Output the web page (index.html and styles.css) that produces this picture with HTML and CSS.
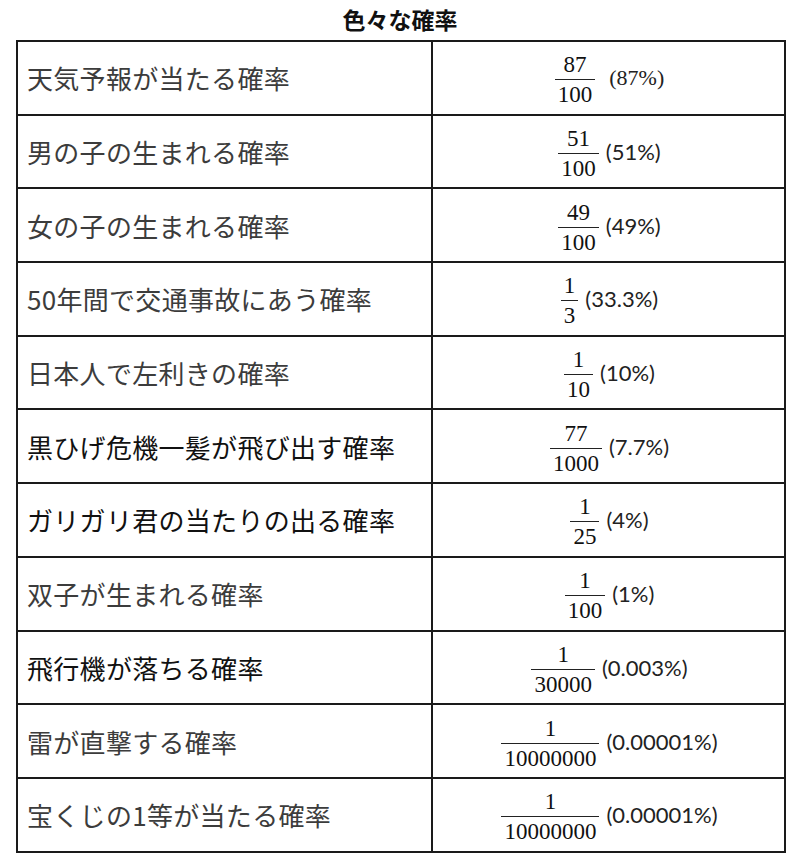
FILE: index.html
```html
<!DOCTYPE html>
<html lang="ja">
<head>
<meta charset="utf-8">
<title>色々な確率</title>
<link rel="stylesheet" href="styles.css">
</head>
<body>
<div class="page">
  <h1 class="title">色々な確率</h1>
  <table class="prob">
    <colgroup><col class="c-label"><col class="c-value"></colgroup>
    <tbody>
      <tr><td class="label">天気予報が当たる確率</td><td class="value"><div class="val wide"><span class="frac"><span class="num">87</span><span class="den">100</span></span><span class="pct serif">(87%)</span></div></td></tr>
      <tr><td class="label">男の子の生まれる確率</td><td class="value"><div class="val"><span class="frac"><span class="num">51</span><span class="den">100</span></span><span class="pct">(51%)</span></div></td></tr>
      <tr><td class="label">女の子の生まれる確率</td><td class="value"><div class="val"><span class="frac"><span class="num">49</span><span class="den">100</span></span><span class="pct">(49%)</span></div></td></tr>
      <tr><td class="label">50年間で交通事故にあう確率</td><td class="value"><div class="val"><span class="frac"><span class="num">1</span><span class="den">3</span></span><span class="pct">(33.3%)</span></div></td></tr>
      <tr><td class="label">日本人で左利きの確率</td><td class="value"><div class="val"><span class="frac"><span class="num">1</span><span class="den">10</span></span><span class="pct">(10%)</span></div></td></tr>
      <tr><td class="label dark">黒ひげ危機一髪が飛び出す確率</td><td class="value"><div class="val"><span class="frac"><span class="num">77</span><span class="den">1000</span></span><span class="pct">(7.7%)</span></div></td></tr>
      <tr><td class="label dark">ガリガリ君の当たりの出る確率</td><td class="value"><div class="val"><span class="frac"><span class="num">1</span><span class="den">25</span></span><span class="pct">(4%)</span></div></td></tr>
      <tr><td class="label">双子が生まれる確率</td><td class="value"><div class="val"><span class="frac"><span class="num">1</span><span class="den">100</span></span><span class="pct">(1%)</span></div></td></tr>
      <tr><td class="label dark">飛行機が落ちる確率</td><td class="value"><div class="val"><span class="frac"><span class="num">1</span><span class="den">30000</span></span><span class="pct">(0.003%)</span></div></td></tr>
      <tr><td class="label">雷が直撃する確率</td><td class="value"><div class="val"><span class="frac"><span class="num">1</span><span class="den">10000000</span></span><span class="pct">(0.00001%)</span></div></td></tr>
      <tr><td class="label">宝くじの1等が当たる確率</td><td class="value"><div class="val"><span class="frac"><span class="num">1</span><span class="den">10000000</span></span><span class="pct">(0.00001%)</span></div></td></tr>
    </tbody>
  </table>
</div>
</body>
</html>
```

FILE: styles.css
```css
html, body {
  margin: 0;
  padding: 0;
  background: #ffffff;
}

.page {
  padding: 4px 16px 0 16px;
  font-family: "Noto Sans CJK JP", "Noto Sans", sans-serif;
  color: #222;
}

.title {
  margin: 0;
  height: 36px;
  line-height: 30px;
  font-size: 23px;
  font-weight: 700;
  text-align: center;
  color: #111;
}

.prob {
  width: 768px;
  border-collapse: collapse;
  border: 2px solid #1a1a1a;
  table-layout: fixed;
}

.c-label { width: 415px; }
.c-value { width: 353px; }

.prob td {
  border: 2px solid #1a1a1a;
  height: 71.7px;
  padding: 0;
}

.label {
  padding-left: 9px !important;
  font-size: 26px;
  color: #3c3c3c;
  white-space: nowrap;
  letter-spacing: 0.3px;
}

.label.dark {
  color: #111;
}

.val {
  display: flex;
  justify-content: center;
  align-items: center;
  gap: 5px;
}

.val.wide {
  gap: 12px;
}

.frac {
  display: inline-flex;
  flex-direction: column;
  align-items: stretch;
  font-family: "Liberation Serif", "Times New Roman", serif;
  font-size: 23px;
  line-height: 23px;
  color: #111;
  text-align: center;
  padding: 0 2px;
  margin-top: 4px;
}

.num {
  padding-bottom: 3px;
}

.den {
  border-top: 1.5px solid #222;
  padding-top: 3px;
  padding-left: 3px;
  padding-right: 3px;
}

.pct {
  font-family: "Lato", "Noto Sans", sans-serif;
  font-size: 22px;
  color: #222;
}

.pct.serif {
  font-family: "Liberation Serif", "Times New Roman", serif;
  font-size: 22px;
}
```
